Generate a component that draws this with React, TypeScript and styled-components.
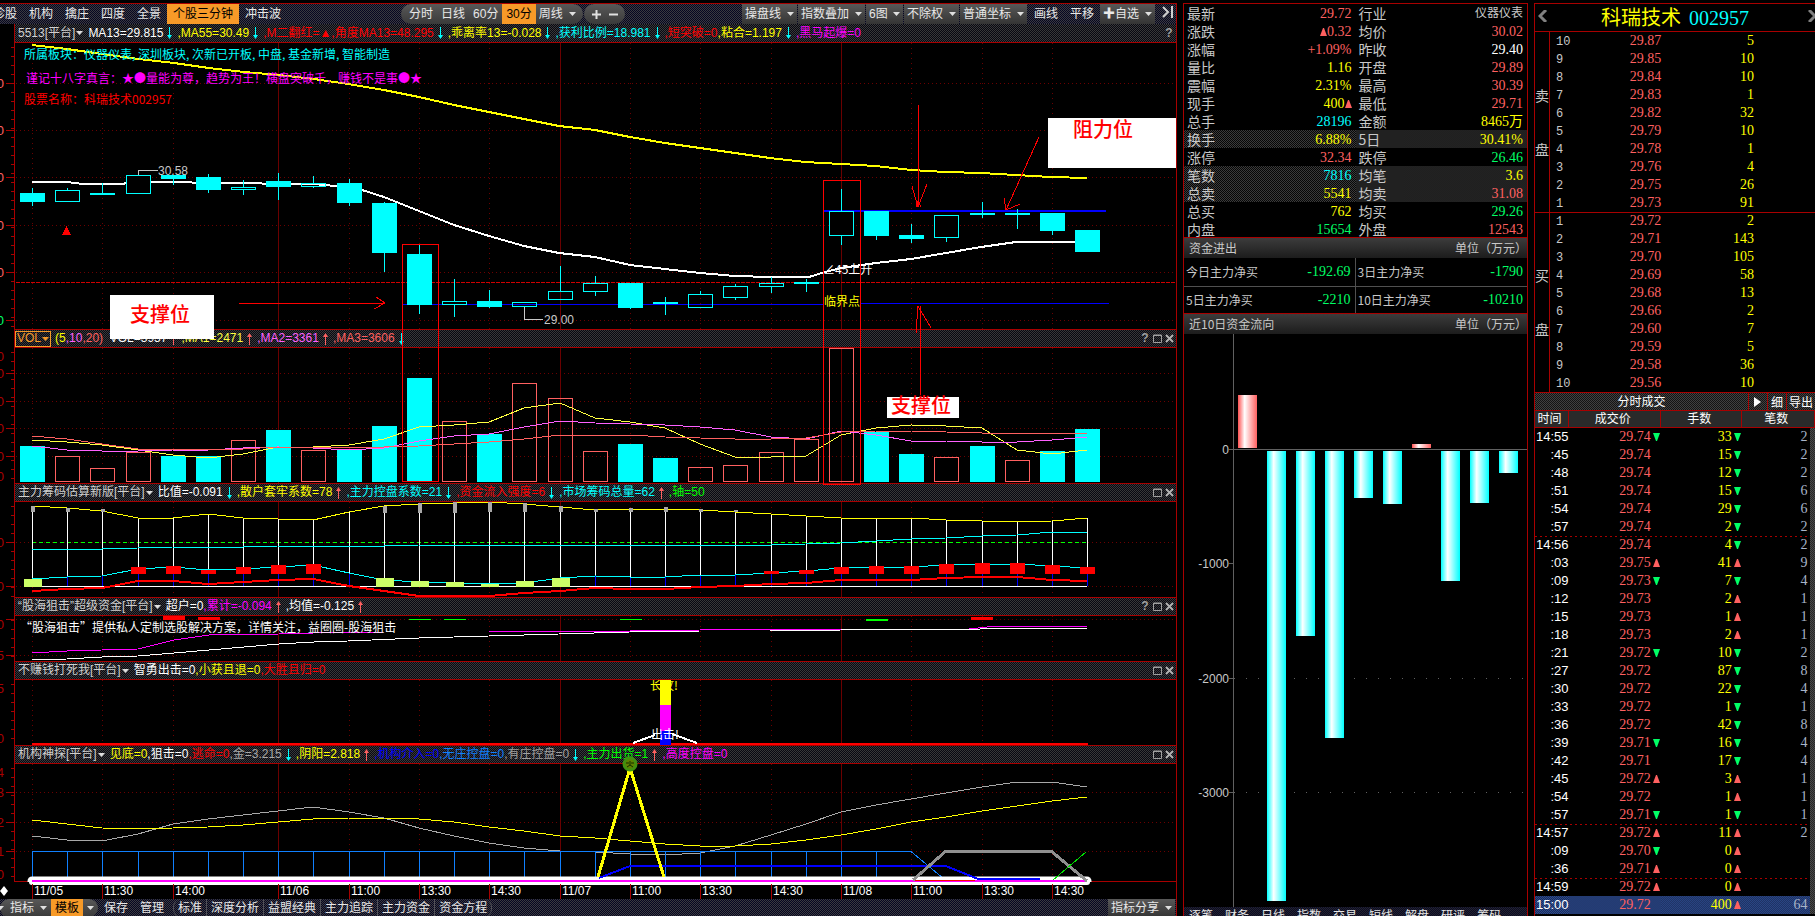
import React from "react";
import styled, { createGlobalStyle, css } from "styled-components";

/* ---------- theme values ---------- */

const RED = "#a80000";
const BRIGHT = "#ff0000";
const CYAN = "#00ffff";
const YELLOW = "#ffff00";
const SOFT = "#ff6060";
const GREEN = "#00ff66";
const MAGENTA = "#ff00ff";
const GREY = "#c8c8c8";
const SANS = '"Liberation Sans", "Noto Sans CJK SC", sans-serif';
const SERIF = '"Liberation Serif", "Noto Sans CJK SC", serif';
const CJK = '"Noto Sans CJK SC", sans-serif';

const GlobalStyle = createGlobalStyle`
  * { box-sizing: border-box; }
  body { margin: 0; background: #000; color: ${GREY}; font: 12px/16px ${SANS}; }
  button, select { font: inherit; color: inherit; background: none; border: 0; margin: 0; padding: 0; }
  table { border-collapse: collapse; border-spacing: 0; }
  th { font-weight: normal; text-align: left; }
`;

const checker = (a: string, b: string) => css`
  background: repeating-conic-gradient(${a} 0 25%, ${b} 0 50%) 0 0 / 2px 2px;
`;

/* ---------- page frame ---------- */

const Page = styled.main`
  display: grid;
  grid-template-columns: minmax(0, 1177fr) minmax(0, 345fr) minmax(0, 281fr);
  gap: 6px;
  height: 100vh;
  padding-top: 3px;
  overflow: hidden;
`;

const ChartColumn = styled.section`
  position: relative;
  display: flex;
  flex-direction: column;
  border-top: 1px solid ${RED};
  border-right: 1px solid ${RED};
  overflow: hidden;
`;

const QuoteColumn = styled.section`
  display: flex;
  flex-direction: column;
  border: 1px solid ${RED};
  border-bottom: 0;
  overflow: hidden;
`;

const BookColumn = styled.section`
  display: flex;
  flex-direction: column;
  border-top: 1px solid ${RED};
  border-left: 1px solid ${RED};
  overflow: hidden;
`;

/* ---------- toolbars ---------- */

const Toolbar = styled.nav<{ $h: number }>`
  display: flex;
  align-items: stretch;
  flex: none;
  height: ${(p) => p.$h}px;
  line-height: ${(p) => p.$h}px;
  color: #e8e8e8;
  white-space: nowrap;
  overflow: hidden;
  ${checker("#3a3a3e", "#060622")}
`;

const TabList = styled.div`
  display: flex;
  margin-left: -13px;
  width: 414px;
  flex: none;
`;

const Tab = styled.button<{ $on?: boolean }>`
  padding: 0 6px;
  ${(p) => p.$on && "background: #f79a28; color: #000;"}
`;

const Pill = styled.div<{ $edge?: boolean }>`
  display: flex;
  margin: ${(p) => (p.$edge ? "0" : "0 1px 0 0")};
  padding: ${(p) => (p.$edge ? "0" : "0 3px 0 4px")};
  border-radius: 10px;
  background: linear-gradient(#585858, #3a3a3a);
`;

const PillButton = styled.button<{ $on?: boolean }>`
  display: flex;
  align-items: center;
  padding: 0 4px;
  ${(p) => p.$on && "background: #f79a28; color: #000;"}
`;

const Spacer = styled.div`
  flex: 1;
`;

const Drop = styled.label<{ $flat?: boolean }>`
  display: flex;
  align-items: center;
  gap: 5px;
  padding: 0 3px;
  margin-right: 1px;
  ${(p) => !p.$flat && "background: linear-gradient(#585858, #343434);"}
`;

const Picker = styled.select`
  appearance: none;
  outline: none;
`;

const PlainButton = styled.button<{ $end?: boolean }>`
  padding: ${(p) => (p.$end ? "0 2px 0 6px" : "0 6px")};
`;

const Caret = ({ color = "#e0e0e0" }: { color?: string }) => (
  <svg width="7" height="4" viewBox="0 0 7 4" aria-hidden="true">
    <path d="M0 0H7L3.500 4Z" fill={color} />
  </svg>
);

const EdgeCaret = styled.svg`
  align-self: center;
`;

const DropDown = ({ text, flat }: { text: string; flat?: boolean }) => (
  <Drop $flat={flat}>
    <Picker aria-label={text} defaultValue={text}>
      <option>{text}</option>
    </Picker>
    <Caret />
  </Drop>
);

/* ---------- indicator headers ---------- */

const HeadBar = styled.header<{ $first?: boolean }>`
  display: flex;
  align-items: center;
  flex: none;
  height: 19px;
  margin-left: 14px;
  padding: 0 8px 0 3px;
  border: solid ${RED};
  border-width: ${(p) => (p.$first ? "0 0 1px 1px" : "1px 0 1px 1px")};
  line-height: 17px;
  white-space: nowrap;
  ${checker("#383838", "#080812")}
`;

const NameButton = styled.button<{ $boxed?: boolean }>`
  display: flex;
  align-items: center;
  gap: 1px;
  height: 17px;
  margin-right: 5px;
  color: #d0d0d0;
  ${(p) =>
    p.$boxed &&
    "height: 16px; margin: 0 4px 0 -3px; padding: 0 1px; border: 1px solid #f79a28; color: #f79a28;"}
`;

const Value = styled.span<{ $c: string }>`
  color: ${(p) => p.$c};
  white-space: pre;
`;

const ArrowSlot = styled.svg`
  flex: none;
  margin: 0 4px 0 3px;
`;

const HeadIcons = styled.div`
  display: flex;
  gap: 2px;
  margin-left: auto;
  margin-right: -6px;
  color: #a0a0a0;
`;

const IconButton = styled.button`
  display: flex;
  align-items: center;
  justify-content: center;
  width: 10px;
  height: 16px;
  font-weight: bold;
`;

type Item = { t: string; c: string; a?: "up" | "down" };

const Arrow = ({ dir }: { dir: "up" | "down" }) => (
  <ArrowSlot width="7" height="14" viewBox="0 0 7 14" aria-hidden="true">
    {dir === "down" ? (
      <path d="M3 1h1v8h2L3.500 13 1 9h2Z" fill={CYAN} />
    ) : (
      <path d="M3 13h1V5h2L3.500 1 1 5h2Z" fill={SOFT} />
    )}
  </ArrowSlot>
);

type HeadProps = {
  name: string;
  items: Item[];
  first?: boolean;
  boxed?: boolean;
  help?: boolean;
};

const Head = ({ name, items, first, boxed, help }: HeadProps) => (
  <HeadBar $first={first}>
    <NameButton $boxed={boxed}>
      {name}
      <Caret color={boxed ? "#f79a28" : "#e0e0e0"} />
    </NameButton>
    {items.map((it, i) => (
      <React.Fragment key={i}>
        <Value $c={it.c}>{it.t}</Value>
        {it.a && <Arrow dir={it.a} />}
      </React.Fragment>
    ))}
    <HeadIcons>
      {help && <IconButton aria-label="帮助">?</IconButton>}
      {!first && (
        <>
          <IconButton aria-label="最大化">
            <svg width="9" height="9" viewBox="0 0 9 9">
              <path d="M.5 1H8.500V8.500H.5ZM.5 1.500H8.500" fill="none" stroke="#a0a0a0" />
            </svg>
          </IconButton>
          <IconButton aria-label="关闭">
            <svg width="9" height="9" viewBox="0 0 9 9">
              <path d="M1 1 8 8M8 1 1 8" stroke="#b0b0b0" strokeWidth="2" />
            </svg>
          </IconButton>
        </>
      )}
    </HeadIcons>
  </HeadBar>
);

/* ---------- charts ---------- */

const Plot = styled.svg<{ $h: number }>`
  display: block;
  flex: none;
  width: 100%;
  height: ${(p) => p.$h}px;
`;

const Overlay = styled.svg`
  position: absolute;
  left: 0;
  top: -4px;
  width: 100%;
  height: 500px;
  pointer-events: none;
`;

const W = 1176;
const X = (i: number) => Math.round(32 + 35.17 * i);
const line = (ys: number[], from = 0) => ys.map((y, k) => `${X(from + k)},${y}`).join(" ");
const DOTTED = [0, 2, 4, 9, 11, 13, 17, 19, 21, 25, 27, 29];
const SOLID = [7, 15, 23];

type PlotProps = {
  top: number;
  h: number;
  rows: number[];
  labels?: [number, string, string?][];
  children: React.ReactNode;
};

const Chart = ({ top, h, rows, labels = [], children }: PlotProps) => {
  const minor: number[] = [];
  for (let y = top + 4; y < top + h; y += 9) minor.push(y);
  return (
    <Plot $h={h} viewBox={`0 ${top} ${W} ${h}`} preserveAspectRatio="none">
      <g stroke="#6a0000" shapeRendering="crispEdges">
        {DOTTED.map((i) => (
          <path key={i} d={`M${X(i) + 0.5} ${top}V${top + h}`} strokeDasharray="1 4" />
        ))}
        {SOLID.map((i) => (
          <path key={i} d={`M${X(i) + 0.5} ${top}V${top + h}`} />
        ))}
        {rows.map((y) => (
          <path key={y} d={`M16 ${y + 0.5}H${W}`} strokeDasharray="1 3" />
        ))}
        <path d={`M14.500 ${top}V${top + h}`} stroke={RED} />
        {minor.map((y) => (
          <path key={y} d={`M11 ${y + 0.5}H14`} stroke={RED} />
        ))}
        {rows.map((y) => (
          <path key={y} d={`M6 ${y + 0.5}H14`} stroke={RED} />
        ))}
      </g>
      {labels.map(([y, t, c]) => (
        <text key={y} x="4" y={y + 5} textAnchor="end" fontSize="13" fill={c || SOFT}>
          {t}
        </text>
      ))}
      <g shapeRendering="crispEdges" fill="none">
        {children}
      </g>
    </Plot>
  );
};

/* [body top, body bottom, high, low, filled] */
const CANDLES: [number, number, number, number, 0 | 1][] = [
  [193, 202, 188, 206, 1], [190, 202, 188, 202, 0], [193, 195, 183, 195, 1],
  [175, 194, 175, 194, 0], [175, 179, 175, 185, 1], [177, 190, 174, 193, 1],
  [187, 190, 180, 195, 0], [181, 187, 173, 200, 1], [183, 187, 176, 188, 0],
  [183, 203, 179, 206, 1], [203, 253, 202, 272, 1], [254, 305, 245, 314, 1],
  [301, 305, 279, 317, 0], [301, 307, 290, 308, 1], [302, 307, 302, 307, 0],
  [291, 300, 266, 300, 0], [283, 292, 276, 296, 0], [283, 308, 283, 309, 1],
  [302, 304, 297, 315, 1], [294, 308, 291, 308, 0], [286, 298, 284, 300, 0],
  [283, 287, 277, 293, 0], [282, 284, 279, 292, 1], [211, 236, 189, 245, 0],
  [211, 236, 211, 240, 1], [235, 239, 224, 243, 1], [215, 238, 215, 242, 0],
  [213, 215, 202, 218, 1], [213, 215, 209, 229, 1], [213, 231, 213, 235, 1],
  [230, 252, 230, 252, 1],
];

const VOLUMES = [
  446, 456, 468, 452, 456, 456, 440, 430, 450, 450, 426, 378, 421, 434, 383, 398,
  451, 444, 458, 467, 465, 452, 439, 348, 432, 454, 457, 446, 460, 451, 429,
];
const FALLING = [0, 4, 5, 7, 9, 10, 11, 13, 17, 18, 24, 25, 27, 29, 30];

const PriceChart = () => (
  <Chart
    top={43}
    h={286}
    rows={[83, 130, 177, 225, 272, 320]}
    labels={[[83, "0"], [130, "0"], [177, "0"], [225, "0"], [272, "0"], [320, "0", GREEN]]}
  >
    <path d="M16 282.500H1176" stroke="#d00000" strokeDasharray="4 1" />
    <path d="M403 304.500H823M861 303.500H1109" stroke="#0000ff" />
    <path d="M824 211H1106" stroke="#0000ff" strokeWidth="2" />
    <polyline
      stroke={YELLOW}
      strokeWidth="2"
      points="32,45 67,49 102,54 138,59 174,63 209,68 244,72 279,75 314,79 348,84 384,90 419,97 454,105 489,112 524,119 559,126 595,130 630,137 665,143 700,148 735,153 770,158 805,162 841,164 876,166 911,170 946,172 981,173 1016,175 1051,177 1087,178"
    />
    <polyline
      stroke="#fff"
      strokeWidth="2"
      points="32,182 67,182 83,184 120,184 138,182 174,182 209,183 314,184 335,186 362,190 384,197 419,211 454,225 489,236 524,246 559,253 595,257 630,265 665,269 700,273 735,276 770,277 809,277 825,272 841,268 876,263 911,259 946,253 981,247 1016,242 1087,242"
    />
    {CANDLES.map(([t, b, hi, lo, f], i) => (
      <g key={i} stroke={CYAN}>
        <path d={`M${X(i) + 0.5} ${hi}V${t}M${X(i) + 0.5} ${b}V${lo}`} />
        <rect
          x={X(i) - 11.5}
          y={t + 0.5}
          width="24"
          height={b - t - 1}
          fill={f ? CYAN : i === 3 || i === 23 || i === 26 ? "#000" : "none"}
        />
      </g>
    ))}
    <path d="M138.500 175V170.500H158M524.500 307V319.500H543" stroke={GREY} />
    <path d="M66.500 226 71 235H62Z" fill={BRIGHT} />
    <g fontSize="12" fill={GREY}>
      <text x="158" y="175">30.58</text>
      <text x="544" y="324">29.00</text>
    </g>
    <g fontSize="12" fontFamily={CJK}>
      <text x="24" y="59" fill={CYAN}>
        所属板块：仪器仪表, 深圳板块, 次新已开板, 中盘, 基金新增, 智能制造
      </text>
      <text x="26" y="83" fill={MAGENTA}>
        谨记十八字真言：★●量能为尊，趋势为王！横盘突破千，赚钱不是事●★
      </text>
      <text x="24" y="104" fill={BRIGHT}>股票名称：科瑞技术002957</text>
      <text x="823" y="274" fill="#fff">∠45上升</text>
      <text x="824" y="306" fill={YELLOW}>临界点</text>
    </g>
  </Chart>
);

const VolumeChart = () => (
  <Chart
    top={348}
    h={135}
    rows={[373, 401, 428, 456]}
    labels={[[356, "0", RED], [373, "0", RED], [401, "0", RED], [428, "0", RED], [456, "0", RED], [476, "0", RED]]}
  >
    {VOLUMES.map((t, i) => {
      const down = FALLING.includes(i);
      return (
        <rect
          key={i}
          x={X(i) - 11.5}
          y={t + 0.5}
          width="24"
          height={481 - t}
          fill={down ? CYAN : "none"}
          stroke={down ? CYAN : SOFT}
        />
      );
    })}
    <polyline
      stroke="#ffff40"
      points={line([
        440, 442, 445, 450, 455, 458, 454, 447, 447, 445, 439, 427, 425, 422, 408, 403,
        418, 422, 428, 444, 457, 457, 456, 435, 428, 425, 426, 428, 450, 454, 450,
      ])}
    />
    <polyline
      stroke="#ff60ff"
      points={line([
        446, 450, 451, 451, 450, 450, 448, 447, 448, 450, 448, 441, 436, 434, 427, 421,
        423, 424, 425, 427, 430, 437, 439, 431, 435, 441, 441, 442, 442, 440, 437,
      ])}
    />
    <polyline
      stroke={SOFT}
      points={line([
        436, 439, 444, 449, 449, 449, 449, 447, 447, 447, 447, 446, 444, 442, 439, 435,
        435, 435, 437, 438, 439, 439, 438, 432, 431, 431, 432, 433, 433, 433, 433,
      ])}
    />
  </Chart>
);

const UPPER = [
  506, 508, 511, 518, 518, 514, 518, 519, 520, 512, 506, 504, 503, 502, 504, 507,
  510, 509, 509, 510, 512, 514, 516, 518, 518, 518, 520, 521, 522, 521, 518,
];
const LOWER = [
  579, 577, 576, 569, 567, 570, 569, 567, 565, 573, 580, 582, 583, 584, 583, 578,
  576, 577, 577, 575, 575, 573, 571, 568, 567, 567, 565, 564, 564, 566, 568,
];
const RED_BOX: Record<number, number> = {
  3: 567, 4: 566, 5: 570, 6: 567, 7: 565, 8: 564, 21: 571, 22: 570, 23: 567,
  24: 566, 25: 566, 26: 564, 27: 563, 28: 563, 29: 565, 30: 567,
};
const LIME_BOX: Record<number, number> = {
  0: 579, 10: 578, 11: 581, 12: 582, 13: 584, 14: 581, 15: 578,
};
const CAPS: Record<number, [number, number]> = {
  0: [506, 512], 1: [508, 512], 2: [509, 512], 10: [506, 513], 11: [503, 513],
  12: [502, 513], 13: [501, 512], 14: [503, 512], 15: [506, 512], 16: [509, 512],
  17: [508, 512], 18: [507, 512], 19: [509, 512], 20: [510, 512],
};

const ChipChart = () => (
  <Chart top={502} h={95} rows={[542, 586]} labels={[[542, "0", RED], [586, "0", RED]]}>
    <path d="M32 542.500H1087" stroke="#00ff00" strokeDasharray="4 3" />
    <path d="M32 586.500H1087" stroke="#fff" />
    {UPPER.map((y, i) => (
      <g key={i}>
        <path d={`M${X(i) + 0.5} ${y}V${LOWER[i]}`} stroke="#fff" />
        <path d={`M${X(i) + 0.5} ${LOWER[i]}V586`} stroke="#0000ff" />
      </g>
    ))}
    <polyline stroke={YELLOW} points={line(UPPER)} />
    <polyline
      stroke={CYAN}
      points={line([
        549, 549, 549, 548, 547, 547, 547, 546, 546, 546, 546, 545, 545, 545, 545, 545,
        545, 545, 545, 545, 545, 545, 544, 543, 541, 539, 538, 536, 535, 532, 532,
      ])}
    />
    <polyline stroke={CYAN} points={line(LOWER)} />
    <polyline
      stroke={BRIGHT}
      strokeWidth="2"
      points={line([
        591, 589, 588, 581, 581, 584, 582, 580, 579, 586, 591, 596, 596, 596, 593, 591,
        588, 589, 589, 587, 586, 584, 583, 580, 580, 580, 578, 577, 577, 580, 581,
      ])}
    />
    {Object.entries(RED_BOX).map(([i, y]) => (
      <rect key={i} x={X(+i) - 7} y={y} width="15" height={574 - y} fill={BRIGHT} />
    ))}
    {Object.entries(LIME_BOX).map(([i, y]) => (
      <rect key={i} x={X(+i) - 8} y={y} width="18" height={587 - y} fill="#ccff66" />
    ))}
    {Object.entries(CAPS).map(([i, [a, b]]) => (
      <rect key={i} x={X(+i) - 1} y={a} width="4" height={b - a} fill="#a8a8a8" />
    ))}
  </Chart>
);

const FundChart = () => (
  <Chart top={616} h={45} rows={[619, 655]} labels={[[624, "0", RED], [655, "5", RED]]}>
    <polyline
      stroke={MAGENTA}
      points="32,653 67,651 102,650 138,649 154,645 174,640 209,635 279,634 314,633 384,632 489,632 505,631 630,631 700,630 872,629 969,629 996,626 1087,626"
    />
    <polyline
      stroke="#fff"
      points="32,660 67,659 102,657 138,656 174,653 209,650 244,647 279,644 314,642 348,641 419,638 489,636 559,634 630,632 700,631 770,631 841,630 980,629 1087,628"
    />
    <path d="M163 616h22v4h-22ZM198 617h22v3h-22ZM971 617h22v3h-22Z" fill={BRIGHT} />
    <path d="M409 619h22v1h-22ZM444 619h22v1h-22ZM620 619h22v1h-22ZM866 619h22v2h-22Z" fill="#00ff00" />
    <text x="20" y="632" fontSize="12" fontFamily={CJK} fill="#fff">
      “股海狙击”提供私人定制选股解决方案，详情关注，益圈圈-股海狙击
    </text>
  </Chart>
);

const SignalChart = () => (
  <Chart top={680} h={65} rows={[]} labels={[[688, "5", RED], [738, "0", RED]]}>
    <path d="M32 744H1088" stroke={BRIGHT} strokeWidth="2" />
    <path d="M633 743 655 735M672 734 697 743" stroke="#fff" strokeWidth="2" />
    <path d="M660 680h11v26h-11Z" fill={YELLOW} />
    <path d="M660 705h11v26h-11Z" fill={MAGENTA} />
    <path d="M660 731h11v14h-11Z" fill="#0000ff" />
    <g fontSize="12" fontFamily={CJK}>
      <text x="650" y="690" fill={YELLOW}>长攻!</text>
      <text x="651" y="739" fill="#fff">出击!</text>
    </g>
  </Chart>
);

const RadarChart = () => (
  <Chart
    top={764}
    h={118}
    rows={[792, 822, 851]}
    labels={[[772, "4", RED], [792, "3", RED], [822, "2", RED], [851, "1", RED], [874, "0", RED]]}
  >
    <path d="M14 881.500H1176" stroke={RED} />
    <polyline
      stroke="#a8a8a8"
      points={line([
        836, 840, 841, 834, 824, 819, 815, 811, 807, 812, 818, 828, 836, 843, 848, 851,
        852, 854, 855, 853, 846, 835, 824, 812, 805, 799, 793, 787, 782, 782, 787,
      ])}
    />
    <polyline
      stroke={YELLOW}
      points={line([
        820, 824, 828, 829, 828, 827, 825, 822, 819, 818, 818, 819, 822, 827, 831, 836,
        838, 841, 844, 846, 846, 844, 840, 835, 829, 822, 817, 811, 806, 801, 797,
      ])}
    />
    <path d="M32 851.500H911L944 879" stroke="#1080ff" />
    {Array.from({ length: 25 }, (_, i) => (
      <path key={i} d={`M${X(i) + 0.5} 851V877`} stroke="#1080ff" />
    ))}
    <path d="M32 881H1087" stroke="#fff" strokeWidth="9" strokeLinecap="round" shapeRendering="auto" />
    <path d="M599 878 630 866H946L978 879H1040" stroke="#0000ff" strokeWidth="2" />
    <path d="M32 880.500H1087" stroke={MAGENTA} strokeWidth="2" />
    <path d="M914 880H975" stroke={BRIGHT} />
    <polyline stroke="#909090" strokeWidth="3" points="913,880 946,851 1051,851 1087,881" />
    <path d="M1053 880 1086 852" stroke="#00e000" />
    <polyline stroke={YELLOW} strokeWidth="3" points="598,877 630,768 664,877" />
  </Chart>
);

const TimeAxis = styled.svg`
  display: block;
  flex: none;
  width: 100%;
  height: 17px;
`;

const TIMES: [number, string][] = [
  [0, "11/05"], [2, "11:30"], [4, "14:00"], [7, "11/06"], [9, "11:00"], [11, "13:30"],
  [13, "14:30"], [15, "11/07"], [17, "11:00"], [19, "13:30"], [21, "14:30"],
  [23, "11/08"], [25, "11:00"], [27, "13:30"], [29, "14:30"],
];

const Annotations = () => (
  <Overlay viewBox="0 0 1176 500" preserveAspectRatio="none">
    <g stroke={BRIGHT} fill="none" shapeRendering="crispEdges">
      <path d="M402.500 244.500H438.500V481.500H402.500Z" />
      <path d="M823.500 180.500H860.500V484.500H823.500Z" />
      <path d="M239 303.500H385M376 297 385 303 374 309" />
      <path d="M918.500 105V207M912 186 918 207 927 184M916 207 918 201 921 207" />
      <path d="M1039 137 1006 210M1004 198 1006 210 1020 204" />
      <path d="M920.500 395V306M916 333 918 306 931 328" />
    </g>
    <path d="M110 295H214V339H110ZM1048 118H1176V168H1048ZM887 397H959V418H887Z" fill="#fff" />
    <g fontSize="20" fontFamily={CJK} fontWeight="500" fill={BRIGHT}>
      <text x="130" y="322">支撑位</text>
      <text x="1073" y="137">阻力位</text>
      <text x="891" y="413">支撑位</text>
    </g>
  </Overlay>
);

const PeakBadge = styled.svg`
  position: absolute;
  left: 53.600%;
  top: 752px;
  transform: translateX(-50%);
`;

/* ---------- quote column ---------- */

const QuoteTable = styled.table`
  flex: none;
  width: 100%;
  margin-bottom: -1px;
  table-layout: fixed;
`;

const QuoteRow = styled.tr<{ $hot?: boolean }>`
  height: 18px;
  ${(p) => p.$hot && checker("#3c3c3c", "#060606")}
`;

const QuoteLabel = styled.th`
  width: 14%;
  padding: 0 0 0 3px;
  font: 14px/17px ${CJK};
  white-space: nowrap;
`;

const QuoteValue = styled.td<{ $c: string; $small?: boolean }>`
  padding: 0 4px 0 0;
  color: ${(p) => p.$c};
  font: ${(p) => (p.$small ? 12 : 14)}px/17px ${SERIF};
  text-align: right;
  white-space: nowrap;
`;

const SectionHead = styled.h2`
  display: flex;
  align-items: center;
  justify-content: space-between;
  flex: none;
  height: 21px;
  margin: 0;
  padding: 0 0 0 5px;
  border-top: 1px solid ${RED};
  background: linear-gradient(#3c3c3c, #1c1c1c);
  font: 12px/20px ${CJK};
`;

const NetGrid = styled.dl`
  display: grid;
  grid-template-columns: 1fr 1fr;
  flex: none;
  margin: 0;
`;

const NetCell = styled.div<{ $top?: boolean; $left?: boolean }>`
  display: flex;
  align-items: center;
  justify-content: space-between;
  height: ${(p) => (p.$top ? 29 : 26)}px;
  padding: 0 4px 0 2px;
  border-bottom: ${(p) => (p.$top ? "1px solid #505050" : "0")};
  border-right: ${(p) => (p.$left ? "1px solid #505050" : "0")};
  font: 12px/18px ${CJK};
`;

const NetValue = styled.dd`
  margin: 0;
  color: ${GREEN};
  font: 14px/18px ${SERIF};
`;

const QuoteTabs = styled.nav`
  display: flex;
  flex: none;
  gap: 12px;
  height: 18px;
  padding-left: 5px;
  color: #e8e8e8;
  white-space: nowrap;
  ${checker("#24242c", "#0a0a26")}
`;

type Q = [string, string, string, string, string, string, boolean?];
const QUOTES: Q[] = [
  ["最新", "29.72", SOFT, "行业", "仪器仪表", GREY],
  ["涨跌", "^0.32", SOFT, "均价", "30.02", SOFT],
  ["涨幅", "+1.09%", SOFT, "昨收", "29.40", "#fff"],
  ["量比", "1.16", YELLOW, "开盘", "29.89", SOFT],
  ["震幅", "2.31%", YELLOW, "最高", "30.39", SOFT],
  ["现手", "400^", YELLOW, "最低", "29.71", SOFT],
  ["总手", "28196", CYAN, "金额", "8465万", YELLOW],
  ["换手", "6.88%", YELLOW, "5日", "30.41%", YELLOW, true],
  ["涨停", "32.34", SOFT, "跌停", "26.46", GREEN],
  ["笔数", "7816", CYAN, "均笔", "3.6", YELLOW, true],
  ["总卖", "5541", YELLOW, "均卖", "31.08", SOFT, true],
  ["总买", "762", YELLOW, "均买", "29.26", GREEN],
  ["内盘", "15654", GREEN, "外盘", "12543", SOFT],
];

const UpMark = () => (
  <svg width="7" height="8" viewBox="0 0 7 8" aria-label="涨">
    <path d="M3 0H4L7 8H0Z" fill={SOFT} />
  </svg>
);
const DownMark = () => (
  <svg width="7" height="8" viewBox="0 0 7 8" aria-label="跌">
    <path d="M0 0H7L4 8H3Z" fill={GREEN} />
  </svg>
);

const withMark = (s: string) =>
  s.split("^").map((part, i) => (
    <React.Fragment key={i}>
      {i > 0 && <UpMark />}
      {part}
    </React.Fragment>
  ));

const NETS = [
  ["今日主力净买", "-192.69"],
  ["3日主力净买", "-1790"],
  ["5日主力净买", "-2210"],
  ["10日主力净买", "-10210"],
];

/* [top, bottom] of each day's bar */
const FLOWS = [
  [395, 448], [451, 901], [451, 636], [451, 738], [451, 498],
  [451, 504], [444, 448], [451, 581], [451, 503], [451, 473],
];

const FlowChart = () => (
  <Plot $h={573} viewBox="1184 334 343 573" preserveAspectRatio="none">
    <defs>
      <linearGradient id="inflow">
        <stop offset="0" stopColor="#ff5050" />
        <stop offset=".35" stopColor="#fff" />
        <stop offset="1" stopColor="#ff6060" />
      </linearGradient>
      <linearGradient id="outflow">
        <stop offset="0" stopColor="#00ffff" />
        <stop offset=".35" stopColor="#fff" />
        <stop offset="1" stopColor="#00ffff" />
      </linearGradient>
    </defs>
    <g stroke="#606060" shapeRendering="crispEdges">
      <path d="M1233.500 334V907M1229 449.500H1527M1229 563.500H1233M1229 678.500H1233M1229 792.500H1233" />
      <path d="M1234 678.500H1527M1234 792.500H1527" strokeDasharray="1 11" />
    </g>
    <g fontSize="12" fill={GREY} textAnchor="end">
      <text x="1229" y="454">0</text>
      <text x="1229" y="568">-1000</text>
      <text x="1229" y="683">-2000</text>
      <text x="1229" y="797">-3000</text>
    </g>
    {FLOWS.map(([a, b], i) => (
      <rect
        key={i}
        x={1238 + 29 * i}
        y={a}
        width="19"
        height={b - a}
        fill={b < 449 ? "url(#inflow)" : "url(#outflow)"}
      />
    ))}
  </Plot>
);

/* ---------- order book ---------- */

const StockTitle = styled.div`
  display: flex;
  align-items: center;
  flex: none;
  height: 28px;
  padding: 0 0 0 3px;
  border-bottom: 1px solid ${RED};
`;

const StockName = styled.h1`
  flex: 1;
  margin: 0;
  padding-right: 6px;
  color: ${YELLOW};
  font: 20px/27px ${CJK};
  text-align: center;
`;

const StockCode = styled.span`
  margin-left: 8px;
  color: ${CYAN};
  font: 20px/27px ${SERIF};
`;

const BookSide = styled.div`
  display: flex;
  flex: none;
  margin-bottom: -1px;
  border-bottom: 1px solid ${RED};
`;

const SideName = styled.div`
  display: flex;
  flex-direction: column;
  align-items: center;
  justify-content: center;
  gap: 40px;
  width: 15px;
  border-right: 1px solid ${RED};
  font: 14px/14px ${CJK};
`;

const BookTable = styled.table`
  flex: 1;
  table-layout: fixed;
`;

const Level = styled.th`
  width: 20%;
  height: 18px;
  padding: 0 0 0 6px;
  font: 12px/16px "Liberation Mono", monospace;
  vertical-align: bottom;
`;

const BookCell = styled.td<{ $c: string; $w: number; $pad?: number }>`
  width: ${(p) => p.$w}%;
  height: 18px;
  padding: 0 ${(p) => p.$pad || 0}px 0 0;
  color: ${(p) => p.$c};
  font: 14px/18px ${SERIF};
  text-align: right;
`;

const DealHead = styled.div`
  display: flex;
  align-items: stretch;
  flex: none;
  height: 18px;
  color: #fff;
  font: 12px/15px ${CJK};
  white-space: nowrap;
  overflow: hidden;
  border-top: 1px solid ${RED};
  ${checker("#404040", "#141414")}
`;

const DealTitle = styled.h2`
  flex: 1;
  margin: 0;
  font: inherit;
  text-align: center;
`;

const DealButton = styled.button`
  flex: none;
  min-width: 19px;
  padding: 0 2px;
  border-left: 1px solid ${RED};
`;

const DealArea = styled.div`
  position: relative;
`;

const DealTable = styled.table`
  width: 100%;
  table-layout: fixed;
`;

const DealColumn = styled.th<{ $w?: number }>`
  width: ${(p) => (p.$w ? p.$w + "%" : "auto")};
  height: 17px;
  padding: 0 4px 0 0;
  border: solid ${RED};
  border-width: 1px 1px 1px 0;
  color: #fff;
  font: 12px/14px ${CJK};
  text-align: center;
  vertical-align: top;
  ${checker("#404040", "#141414")}
`;

const DealRow = styled.tr<{ $rule?: boolean; $now?: boolean }>`
  height: 18px;
  ${(p) => p.$rule && `background: repeating-linear-gradient(90deg, ${RED} 0 2px, transparent 2px 5px) 0 0 / 100% 1px no-repeat;`}
  ${(p) => p.$now && checker("#2c4c8c", "#1c2c5c")}
`;

const DealCell = styled.td<{ $c: string; $sans?: boolean; $pad?: number }>`
  height: 18px;
  padding: 0 ${(p) => p.$pad || 0}px 0 0;
  color: ${(p) => p.$c};
  font: ${(p) => (p.$sans ? `13px/18px ${SANS}` : `14px/18px ${SERIF}`)};
  text-align: right;
  white-space: nowrap;
`;

const MarkSlot = styled.span`
  display: inline-block;
  width: 10px;
  padding-left: 2px;
  text-align: left;
`;

const ScrollTrack = styled.div`
  position: absolute;
  top: 18px;
  right: 0;
  bottom: 0;
  width: 5px;
  ${checker("#484848", "#282828")}
`;

const ASKS: [number, string, number][] = [
  [10, "29.87", 5], [9, "29.85", 10], [8, "29.84", 10], [7, "29.83", 1], [6, "29.82", 32],
  [5, "29.79", 10], [4, "29.78", 1], [3, "29.76", 4], [2, "29.75", 26], [1, "29.73", 91],
];
const BIDS: [number, string, number][] = [
  [1, "29.72", 2], [2, "29.71", 143], [3, "29.70", 105], [4, "29.69", 58], [5, "29.68", 13],
  [6, "29.66", 2], [7, "29.60", 7], [8, "29.59", 5], [9, "29.58", 36], [10, "29.56", 10],
];

/* time, price, price move, lots, lots move, trades */
const DEALS: [string, string, string, number, string, string][] = [
  ["14:55", "29.74", "v", 33, "v", "2"], [":45", "29.74", "", 15, "v", "2"],
  [":48", "29.74", "", 12, "v", "2"], [":51", "29.74", "", 15, "v", "6"],
  [":54", "29.74", "", 29, "v", "6"], [":57", "29.74", "", 2, "v", "2"],
  ["14:56", "29.74", "", 4, "v", "2"], [":03", "29.75", "^", 41, "^", "9"],
  [":09", "29.73", "v", 7, "v", "4"], [":12", "29.73", "", 2, "^", "1"],
  [":15", "29.73", "", 1, "^", "1"], [":18", "29.73", "", 2, "^", "1"],
  [":21", "29.72", "v", 10, "v", "2"], [":27", "29.72", "", 87, "v", "8"],
  [":30", "29.72", "", 22, "v", "4"], [":33", "29.72", "", 1, "v", "1"],
  [":36", "29.72", "", 42, "v", "8"], [":39", "29.71", "v", 16, "v", "4"],
  [":42", "29.71", "", 17, "v", "4"], [":45", "29.72", "^", 3, "^", "1"],
  [":54", "29.72", "", 1, "^", "1"], [":57", "29.71", "v", 1, "v", "1"],
  ["14:57", "29.72", "^", 11, "^", "2"], [":09", "29.70", "v", 0, "^", ""],
  [":36", "29.71", "^", 0, "^", ""], ["14:59", "29.72", "^", 0, "^", ""],
  ["15:00", "29.72", "", 400, "^", "64"],
];

const Mark = ({ m }: { m: string }) => (
  <MarkSlot>{m === "^" ? <UpMark /> : m === "v" ? <DownMark /> : null}</MarkSlot>
);

const Book = ({ name, rows }: { name: [string, string]; rows: [number, string, number][] }) => (
  <BookSide>
    <SideName>
      <span>{name[0]}</span>
      <span>{name[1]}</span>
    </SideName>
    <BookTable>
      <tbody>
        {rows.map(([n, price, qty]) => (
          <tr key={n}>
            <Level>{n}</Level>
            <BookCell $c={SOFT} $w={22}>{price}</BookCell>
            <BookCell $c={YELLOW} $w={58} $pad={61}>{qty}</BookCell>
          </tr>
        ))}
      </tbody>
    </BookTable>
  </BookSide>
);

/* ---------- bottom bar ---------- */

const TemplateLinks = styled.div`
  display: flex;
  margin-left: 3px;
  border: 1px solid #505058;
  border-width: 0 1px;
  border-radius: 8px;
`;

const TemplateLink = styled.a`
  padding: 0 4px;
  color: inherit;
  text-decoration: none;
  & + & {
    border-left: 1px solid #505058;
  }
`;

/* ---------- page ---------- */

export default function App() {
  return (
    <Page>
      <GlobalStyle />
      <ChartColumn>
        <Toolbar $h={20}>
          <TabList>
            {["诊股", "机构", "擒庄", "四度", "全景", "个股三分钟", "冲击波"].map((t) => (
              <Tab key={t} $on={t === "个股三分钟"}>{t}</Tab>
            ))}
          </TabList>
          <Pill>
            <PillButton>分时</PillButton>
            <PillButton>日线</PillButton>
            <PillButton>60分</PillButton>
            <PillButton $on>30分</PillButton>
            <DropDown text="周线" flat />
          </Pill>
          <Pill>
            <PillButton aria-label="放大">
              <svg width="9" height="9" viewBox="0 0 9 9">
                <path d="M4.500 0V9M0 4.500H9" stroke="#e0e0e0" strokeWidth="2" />
              </svg>
            </PillButton>
            <PillButton aria-label="缩小">
              <svg width="9" height="9" viewBox="0 0 9 9">
                <path d="M0 4.500H9" stroke="#e0e0e0" strokeWidth="2" />
              </svg>
            </PillButton>
          </Pill>
          <Spacer />
          <DropDown text="操盘线" />
          <DropDown text="指数叠加" />
          <DropDown text="6图" />
          <DropDown text="不除权" />
          <DropDown text="普通坐标" />
          <PlainButton>画线</PlainButton>
          <PlainButton>平移</PlainButton>
          <DropDown text="✚自选" />
          <PlainButton aria-label="收起侧栏" $end>
            <svg width="12" height="12" viewBox="0 0 12 12">
              <path d="M1 1 6 6 1 11M10 0V12" fill="none" stroke="#d0d0d0" strokeWidth="2" />
            </svg>
          </PlainButton>
        </Toolbar>

        <Head
          name="5513[平台]"
          first
          help
          items={[
            { t: "MA13=29.815", c: "#fff", a: "down" },
            { t: ",MA55=30.49", c: YELLOW, a: "down" },
            { t: ",M二翻红=▲,角度MA13=48.295", c: BRIGHT, a: "down" },
            { t: ",乖离率13=-0.028", c: YELLOW, a: "down" },
            { t: ",获利比例=18.981", c: CYAN, a: "down" },
            { t: ",短突破=0", c: BRIGHT },
            { t: ",粘合=1.197", c: YELLOW, a: "down" },
            { t: ",黑马起爆=0", c: MAGENTA },
          ]}
        />
        <PriceChart />

        <Head
          name="VOL"
          boxed
          help
          items={[
            { t: "(5", c: YELLOW },
            { t: ",10", c: "#ff60ff" },
            { t: ",20)  ", c: SOFT },
            { t: "VOL=3957", c: "#fff", a: "up" },
            { t: ",MA1=2471", c: "#ffff40", a: "up" },
            { t: ",MA2=3361", c: "#ff60ff", a: "up" },
            { t: ",MA3=3606", c: SOFT, a: "down" },
          ]}
        />
        <VolumeChart />

        <Head
          name="主力筹码估算新版[平台]"
          items={[
            { t: "比值=-0.091", c: "#fff", a: "down" },
            { t: ",散户套牢系数=78", c: YELLOW, a: "up" },
            { t: ",主力控盘系数=21", c: CYAN, a: "down" },
            { t: ",资金流入强度=6", c: BRIGHT, a: "down" },
            { t: ",市场筹码总量=62", c: CYAN, a: "up" },
            { t: ",轴=50", c: "#00ff00" },
          ]}
        />
        <ChipChart />

        <Head
          name="“股海狙击”超级资金[平台]"
          help
          items={[
            { t: "超户=0", c: "#fff" },
            { t: ",累计=-0.094", c: MAGENTA, a: "up" },
            { t: ",均值=-0.125", c: "#fff", a: "up" },
          ]}
        />
        <FundChart />

        <Head
          name="不赚钱打死我[平台]"
          items={[
            { t: "智勇出击=0", c: "#fff" },
            { t: ",小获且退=0", c: YELLOW },
            { t: ",大胜且归=0", c: BRIGHT },
          ]}
        />
        <SignalChart />

        <Head
          name="机构神探[平台]"
          items={[
            { t: "见底=0", c: YELLOW },
            { t: ",狙击=0", c: "#fff" },
            { t: ",逃命=0", c: BRIGHT },
            { t: ",金=3.215", c: "#a8a8a8", a: "down" },
            { t: ",阴阳=2.818", c: YELLOW, a: "up" },
            { t: ",机构介入=0", c: "#0000ff" },
            { t: ",无庄控盘=0", c: "#1080ff" },
            { t: ",有庄控盘=0", c: "#a0a0a0", a: "down" },
            { t: ",主力出货=1", c: "#00ff00", a: "up" },
            { t: ",高度控盘=0", c: MAGENTA },
          ]}
        />
        <RadarChart />

        <TimeAxis viewBox={`0 882 ${W} 17`} preserveAspectRatio="none">
          <path d="M32 882H1087" stroke="#fff" strokeWidth="6" strokeLinecap="round" />
          <path d="M4 886 8 891 4 896 0 891Z" fill="#fff" />
          {TIMES.map(([i, t]) => (
            <g key={i}>
              <path d={`M${X(i) + 0.5} 884V899`} stroke={RED} />
              <text x={X(i) + 2} y="895" fontSize="12" fill="#fff">{t}</text>
            </g>
          ))}
        </TimeAxis>

        <Toolbar $h={18} as="footer">
          <Pill $edge>
            <EdgeCaret width="7" height="4" viewBox="0 0 7 4" aria-hidden="true">
              <path d="M-3 0H4L.5 4Z" fill="#e0e0e0" />
            </EdgeCaret>
            <DropDown text="指标" flat />
            <PillButton $on>模板</PillButton>
            <PillButton aria-label="模板菜单">
              <Caret />
            </PillButton>
          </Pill>
          <PlainButton>保存</PlainButton>
          <PlainButton>管理</PlainButton>
          <TemplateLinks>
            {["标准", "深度分析", "益盟经典", "主力追踪", "主力资金", "资金方程"].map((t) => (
              <TemplateLink key={t} href="#">{t}</TemplateLink>
            ))}
          </TemplateLinks>
          <Spacer />
          <DropDown text="指标分享" />
        </Toolbar>

        <Annotations />
        <PeakBadge width="16" height="16" viewBox="0 0 16 16">
          <circle cx="8" cy="8" r="6" fill="#608000" stroke="#409010" strokeWidth="3" />
          <path d="M4 7h3M9 7h3M8 5v4M5 11 8 9 11 11" stroke="#103000" fill="none" />
        </PeakBadge>
      </ChartColumn>

      <QuoteColumn>
        <QuoteTable>
          <tbody>
            {QUOTES.map(([a, av, ac, b, bv, bc, hot]) => (
              <QuoteRow key={a} $hot={hot}>
                <QuoteLabel>{a}</QuoteLabel>
                <QuoteValue $c={ac}>{withMark(av)}</QuoteValue>
                <QuoteLabel>{b}</QuoteLabel>
                <QuoteValue $c={bc} $small={a === "最新"}>{bv}</QuoteValue>
              </QuoteRow>
            ))}
          </tbody>
        </QuoteTable>
        <SectionHead>
          <span>资金进出</span>
          <span>单位（万元）</span>
        </SectionHead>
        <NetGrid>
          {NETS.map(([k, v], i) => (
            <NetCell key={k} $top={i < 2} $left={i % 2 === 0}>
              <dt>{k}</dt>
              <NetValue>{v}</NetValue>
            </NetCell>
          ))}
        </NetGrid>
        <SectionHead>
          <span>近10日资金流向</span>
          <span>单位（万元）</span>
        </SectionHead>
        <FlowChart />
        <QuoteTabs>
          {["逐笔", "财务", "日线", "指数", "交易", "短线", "解盘", "研评", "筹码"].map((t) => (
            <button key={t}>{t}</button>
          ))}
        </QuoteTabs>
      </QuoteColumn>

      <BookColumn>
        <StockTitle>
          <button aria-label="上一只">
            <svg width="10" height="12" viewBox="0 0 10 12">
              <path d="M8 0 2 6 8 12" fill="none" stroke="#808080" strokeWidth="3" />
            </svg>
          </button>
          <StockName>
            科瑞技术
            <StockCode>002957</StockCode>
          </StockName>
          <button aria-label="下一只">
            <svg width="7" height="12" viewBox="0 0 7 12">
              <path d="M1 0 7 6 1 12" fill="none" stroke="#808080" strokeWidth="3" />
            </svg>
          </button>
        </StockTitle>
        <Book name={["卖", "盘"]} rows={ASKS} />
        <Book name={["买", "盘"]} rows={BIDS} />
        <DealHead>
          <DealTitle>分时成交</DealTitle>
          <DealButton aria-label="播放">
            <svg width="7" height="10" viewBox="0 0 7 10">
              <path d="M0 0 7 5 0 10Z" fill="#fff" />
            </svg>
          </DealButton>
          <DealButton>细</DealButton>
          <DealButton>导出</DealButton>
        </DealHead>
        <DealArea>
          <DealTable>
            <thead>
              <tr>
                <DealColumn $w={12}>时间</DealColumn>
                <DealColumn $w={33}>成交价</DealColumn>
                <DealColumn $w={29}>手数</DealColumn>
                <DealColumn>笔数</DealColumn>
              </tr>
            </thead>
            <tbody>
              {DEALS.map(([time, price, pm, lots, lm, n], i) => (
                <DealRow key={i} $rule={i > 0 && time.length > 3} $now={time === "15:00"}>
                  <DealCell $c="#fff" $sans>{time}</DealCell>
                  <DealCell $c={SOFT}>{price}<Mark m={pm} /></DealCell>
                  <DealCell $c={YELLOW}>{lots}<Mark m={lm} /></DealCell>
                  <DealCell $c="#a8b4c8" $pad={7}>{n}</DealCell>
                </DealRow>
              ))}
            </tbody>
          </DealTable>
          <ScrollTrack />
        </DealArea>
      </BookColumn>
    </Page>
  );
}
